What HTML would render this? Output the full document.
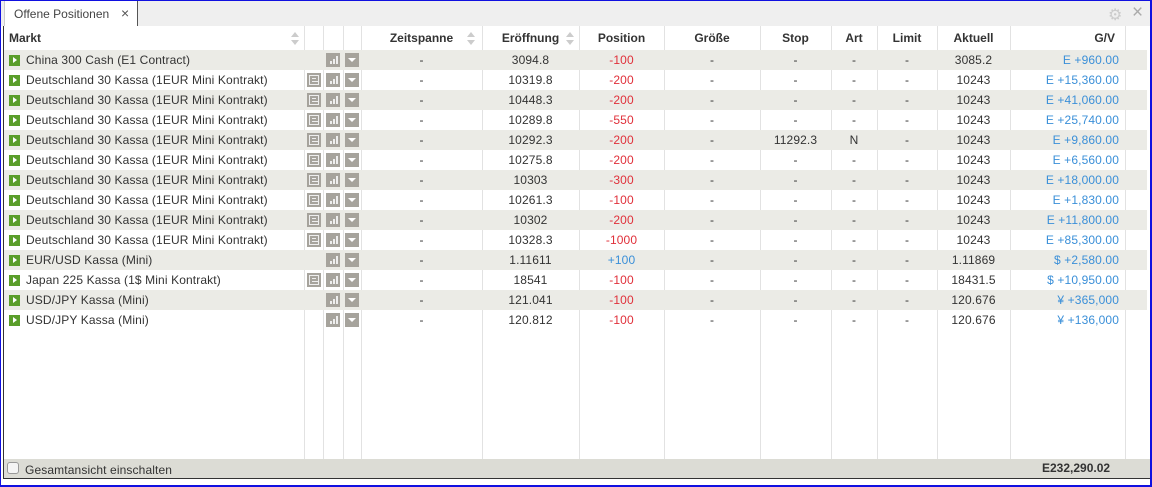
<!DOCTYPE html>
<html><head><meta charset="utf-8"><style>
*{margin:0;padding:0;box-sizing:border-box}
body{width:1152px;height:487px;overflow:hidden;background:#fff;font-family:"Liberation Sans",Arial,sans-serif;font-size:12px;letter-spacing:0.12px;color:#333;position:relative}
.frame{position:absolute;left:0;top:0;width:1152px;height:487px;border:2px solid #1010e0;border-width:1px 2px 2px 1px}
.tabbar{position:absolute;left:1px;top:1px;width:1149px;height:25px;background:#efefef}
.tab{position:absolute;left:3px;top:0;width:134px;height:25px;background:#fff;border-right:1px solid #555;border-left:1px solid #ccc;padding:6px 0 0 9px;color:#444;letter-spacing:0}
.tab span{position:absolute;left:116px;top:4px;font-size:14px;color:#555}
.gear{position:absolute;left:1107px;top:4px;color:#ccc;font-size:16px}
.cls{position:absolute;left:1131px;top:1px;color:#aaa;font-size:19px}
table{position:absolute;left:4px;top:26px;border-collapse:collapse;table-layout:fixed;width:1143px}
td{height:20px;white-space:nowrap;overflow:hidden;text-align:center;padding:0}
tr.h td{height:23px;font-weight:bold;color:#333;letter-spacing:0}
tr.g td{background:#ebebe6}
td.l{text-align:left;padding-left:5px}
td.r{text-align:right;padding-right:6px}
.red{color:#e0303a}.blu{color:#3a8fd8}
.pl{display:inline-block;width:11px;height:11px;background:#5a9e2a;vertical-align:-2px;margin-right:6px;position:relative}
.pl:after{content:"";position:absolute;left:4px;top:2px;border-left:4px solid #fff;border-top:3.5px solid transparent;border-bottom:3.5px solid transparent}
.ic{display:inline-block;width:14px;height:14px;background:#a6a39c;vertical-align:-3px;position:relative}
.dd:after{content:"";position:absolute;left:3px;top:5px;border-top:4px solid #fff;border-left:4px solid transparent;border-right:4px solid transparent}
.bar i{position:absolute;bottom:3px;width:2px;background:#eee}
.nw:after{content:"";position:absolute;left:2px;top:2px;width:10px;height:10px;border:1px solid #eee;box-sizing:border-box;background:linear-gradient(#eee,#eee) 2px 2px/4px 1px no-repeat,linear-gradient(#eee,#eee) 2px 5px/6px 1px no-repeat}
.srt{position:absolute;width:8px;height:14px}
.srt:before{content:"";position:absolute;top:0;border-bottom:5px solid #ccc;border-left:4px solid transparent;border-right:4px solid transparent}
.srt:after{content:"";position:absolute;top:8px;border-top:5px solid #ccc;border-left:4px solid transparent;border-right:4px solid transparent}
.vl{position:absolute;top:26px;height:433px;width:1px;background:#e2e2e2}
.foot{position:absolute;left:3px;top:459px;width:1147px;height:20px;background:#dcdcd5;border-bottom:1px solid #333}
.cb{position:absolute;left:4px;top:3px;width:12px;height:12px;border:1px solid #999;border-radius:3px;background:#f4f4f4}
.lside{position:absolute;left:3px;top:26px;width:1px;height:453px;background:#333}
</style></head><body>
<div class="tabbar"><div class="tab">Offene Positionen<span>×</span></div><div class="gear">⚙</div><div class="cls">×</div></div>
<div class="vl" style="left:304px"></div><div class="vl" style="left:323px"></div><div class="vl" style="left:343px"></div><div class="vl" style="left:361px"></div><div class="vl" style="left:482px"></div><div class="vl" style="left:579px"></div><div class="vl" style="left:664px"></div><div class="vl" style="left:760px"></div><div class="vl" style="left:831px"></div><div class="vl" style="left:877px"></div><div class="vl" style="left:937px"></div><div class="vl" style="left:1010px"></div><div class="vl" style="left:1125px"></div>
<div class="srt" style="left:291px;top:32px"></div><div class="srt" style="left:467px;top:32px"></div><div class="srt" style="left:566px;top:32px"></div>
<table>
<colgroup><col style="width:300px"><col style="width:19px"><col style="width:20px"><col style="width:18px"><col style="width:121px"><col style="width:97px"><col style="width:85px"><col style="width:96px"><col style="width:71px"><col style="width:46px"><col style="width:60px"><col style="width:73px"><col style="width:115px"><col style="width:22px"></colgroup>
<tr class="h"><td class="l" style="height:24px">Markt</td><td></td><td></td><td></td><td>Zeitspanne</td><td>Eröffnung</td><td>Position</td><td>Größe</td><td>Stop</td><td>Art</td><td>Limit</td><td>Aktuell</td><td class="r" style="padding-right:10px">G/V</td><td></td></tr>
<tr class="g"><td class="l"><span class="pl"></span>China 300 Cash (E1 Contract)</td><td></td><td><span class="ic bar"><i style="left:4px;height:3px"></i><i style="left:7px;height:5px"></i><i style="left:10px;height:8px"></i></span></td><td><span class="ic dd"></span></td><td>-</td><td>3094.8</td><td class="red">-100</td><td>-</td><td>-</td><td>-</td><td>-</td><td>3085.2</td><td class="r blu">E +960.00</td><td></td></tr>
<tr><td class="l"><span class="pl"></span>Deutschland 30 Kassa (1EUR Mini Kontrakt)</td><td><span class="ic nw"></span></td><td><span class="ic bar"><i style="left:4px;height:3px"></i><i style="left:7px;height:5px"></i><i style="left:10px;height:8px"></i></span></td><td><span class="ic dd"></span></td><td>-</td><td>10319.8</td><td class="red">-200</td><td>-</td><td>-</td><td>-</td><td>-</td><td>10243</td><td class="r blu">E +15,360.00</td><td></td></tr>
<tr class="g"><td class="l"><span class="pl"></span>Deutschland 30 Kassa (1EUR Mini Kontrakt)</td><td><span class="ic nw"></span></td><td><span class="ic bar"><i style="left:4px;height:3px"></i><i style="left:7px;height:5px"></i><i style="left:10px;height:8px"></i></span></td><td><span class="ic dd"></span></td><td>-</td><td>10448.3</td><td class="red">-200</td><td>-</td><td>-</td><td>-</td><td>-</td><td>10243</td><td class="r blu">E +41,060.00</td><td></td></tr>
<tr><td class="l"><span class="pl"></span>Deutschland 30 Kassa (1EUR Mini Kontrakt)</td><td><span class="ic nw"></span></td><td><span class="ic bar"><i style="left:4px;height:3px"></i><i style="left:7px;height:5px"></i><i style="left:10px;height:8px"></i></span></td><td><span class="ic dd"></span></td><td>-</td><td>10289.8</td><td class="red">-550</td><td>-</td><td>-</td><td>-</td><td>-</td><td>10243</td><td class="r blu">E +25,740.00</td><td></td></tr>
<tr class="g"><td class="l"><span class="pl"></span>Deutschland 30 Kassa (1EUR Mini Kontrakt)</td><td><span class="ic nw"></span></td><td><span class="ic bar"><i style="left:4px;height:3px"></i><i style="left:7px;height:5px"></i><i style="left:10px;height:8px"></i></span></td><td><span class="ic dd"></span></td><td>-</td><td>10292.3</td><td class="red">-200</td><td>-</td><td>11292.3</td><td>N</td><td>-</td><td>10243</td><td class="r blu">E +9,860.00</td><td></td></tr>
<tr><td class="l"><span class="pl"></span>Deutschland 30 Kassa (1EUR Mini Kontrakt)</td><td><span class="ic nw"></span></td><td><span class="ic bar"><i style="left:4px;height:3px"></i><i style="left:7px;height:5px"></i><i style="left:10px;height:8px"></i></span></td><td><span class="ic dd"></span></td><td>-</td><td>10275.8</td><td class="red">-200</td><td>-</td><td>-</td><td>-</td><td>-</td><td>10243</td><td class="r blu">E +6,560.00</td><td></td></tr>
<tr class="g"><td class="l"><span class="pl"></span>Deutschland 30 Kassa (1EUR Mini Kontrakt)</td><td><span class="ic nw"></span></td><td><span class="ic bar"><i style="left:4px;height:3px"></i><i style="left:7px;height:5px"></i><i style="left:10px;height:8px"></i></span></td><td><span class="ic dd"></span></td><td>-</td><td>10303</td><td class="red">-300</td><td>-</td><td>-</td><td>-</td><td>-</td><td>10243</td><td class="r blu">E +18,000.00</td><td></td></tr>
<tr><td class="l"><span class="pl"></span>Deutschland 30 Kassa (1EUR Mini Kontrakt)</td><td><span class="ic nw"></span></td><td><span class="ic bar"><i style="left:4px;height:3px"></i><i style="left:7px;height:5px"></i><i style="left:10px;height:8px"></i></span></td><td><span class="ic dd"></span></td><td>-</td><td>10261.3</td><td class="red">-100</td><td>-</td><td>-</td><td>-</td><td>-</td><td>10243</td><td class="r blu">E +1,830.00</td><td></td></tr>
<tr class="g"><td class="l"><span class="pl"></span>Deutschland 30 Kassa (1EUR Mini Kontrakt)</td><td><span class="ic nw"></span></td><td><span class="ic bar"><i style="left:4px;height:3px"></i><i style="left:7px;height:5px"></i><i style="left:10px;height:8px"></i></span></td><td><span class="ic dd"></span></td><td>-</td><td>10302</td><td class="red">-200</td><td>-</td><td>-</td><td>-</td><td>-</td><td>10243</td><td class="r blu">E +11,800.00</td><td></td></tr>
<tr><td class="l"><span class="pl"></span>Deutschland 30 Kassa (1EUR Mini Kontrakt)</td><td><span class="ic nw"></span></td><td><span class="ic bar"><i style="left:4px;height:3px"></i><i style="left:7px;height:5px"></i><i style="left:10px;height:8px"></i></span></td><td><span class="ic dd"></span></td><td>-</td><td>10328.3</td><td class="red">-1000</td><td>-</td><td>-</td><td>-</td><td>-</td><td>10243</td><td class="r blu">E +85,300.00</td><td></td></tr>
<tr class="g"><td class="l"><span class="pl"></span>EUR/USD Kassa (Mini)</td><td></td><td><span class="ic bar"><i style="left:4px;height:3px"></i><i style="left:7px;height:5px"></i><i style="left:10px;height:8px"></i></span></td><td><span class="ic dd"></span></td><td>-</td><td>1.11611</td><td class="blu">+100</td><td>-</td><td>-</td><td>-</td><td>-</td><td>1.11869</td><td class="r blu">$ +2,580.00</td><td></td></tr>
<tr><td class="l"><span class="pl"></span>Japan 225 Kassa (1$ Mini Kontrakt)</td><td><span class="ic nw"></span></td><td><span class="ic bar"><i style="left:4px;height:3px"></i><i style="left:7px;height:5px"></i><i style="left:10px;height:8px"></i></span></td><td><span class="ic dd"></span></td><td>-</td><td>18541</td><td class="red">-100</td><td>-</td><td>-</td><td>-</td><td>-</td><td>18431.5</td><td class="r blu">$ +10,950.00</td><td></td></tr>
<tr class="g"><td class="l"><span class="pl"></span>USD/JPY Kassa (Mini)</td><td></td><td><span class="ic bar"><i style="left:4px;height:3px"></i><i style="left:7px;height:5px"></i><i style="left:10px;height:8px"></i></span></td><td><span class="ic dd"></span></td><td>-</td><td>121.041</td><td class="red">-100</td><td>-</td><td>-</td><td>-</td><td>-</td><td>120.676</td><td class="r blu">¥ +365,000</td><td></td></tr>
<tr><td class="l"><span class="pl"></span>USD/JPY Kassa (Mini)</td><td></td><td><span class="ic bar"><i style="left:4px;height:3px"></i><i style="left:7px;height:5px"></i><i style="left:10px;height:8px"></i></span></td><td><span class="ic dd"></span></td><td>-</td><td>120.812</td><td class="red">-100</td><td>-</td><td>-</td><td>-</td><td>-</td><td>120.676</td><td class="r blu">¥ +136,000</td><td></td></tr>
</table>
<div class="foot"><div class="cb"></div><span style="position:absolute;left:22px;top:4px">Gesamtansicht einschalten</span><b style="position:absolute;left:1039px;top:2px;letter-spacing:0">E232,290.02</b></div>
<div class="lside"></div>
<div class="frame"></div>
</body></html>
